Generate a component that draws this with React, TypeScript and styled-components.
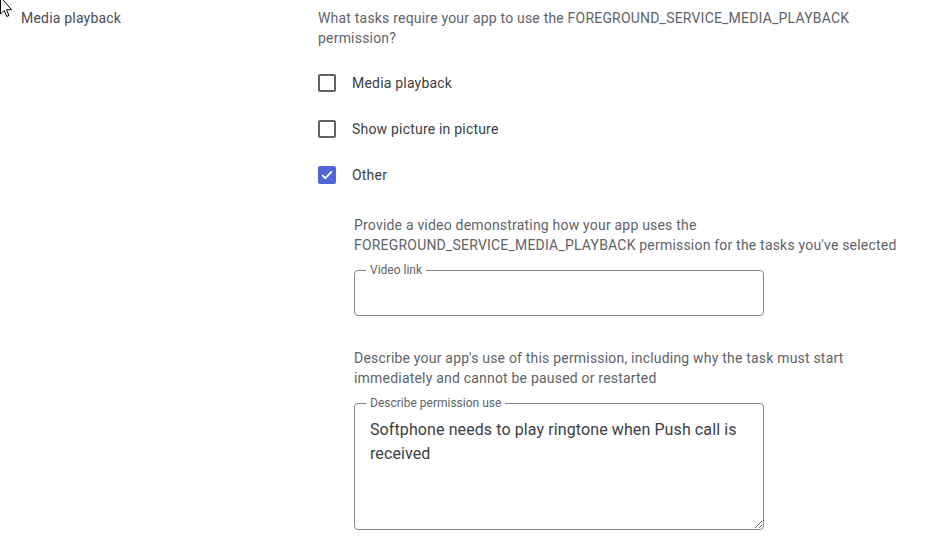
import { useState } from 'react';
import styled, { createGlobalStyle } from 'styled-components';

const GlobalStyle = createGlobalStyle`
  body {
    margin: 0;
    background: #ffffff;
    font-family: Roboto, "Noto Sans", Arial, sans-serif;
  }
`;

const Page = styled.div`
  position: relative;
  display: grid;
  grid-template-columns: 318px 590px;
  padding-top: 8px;
  font-size: 14px;
  line-height: 20px;
  letter-spacing: 0.2px;
`;

const SectionTitle = styled.div`
  padding-left: 21px;
  color: #4a4d51;
`;

const Content = styled.div`
  display: flex;
  flex-direction: column;
`;

const Prompt = styled.p<{ $top?: number }>`
  margin: ${(p) => p.$top ?? 0}px 0 0;
  color: #5f6368;
`;

const Options = styled.div`
  display: flex;
  flex-direction: column;
  margin-top: 12px;
`;

const OptionRow = styled.label`
  display: flex;
  align-items: center;
  gap: 16px;
  height: 46px;
  color: #3c4043;
  cursor: pointer;
`;

const Box = styled.span<{ $checked: boolean }>`
  box-sizing: border-box;
  width: 18px;
  height: 18px;
  border-radius: 2px;
  border: 2px solid ${(p) => (p.$checked ? '#5167d8' : '#5f6368')};
  background: ${(p) => (p.$checked ? '#5167d8' : 'transparent')};
  display: flex;
  align-items: center;
  justify-content: center;
`;

const Nested = styled.div`
  display: flex;
  flex-direction: column;
  margin-top: 17px;
  padding-left: 36px;
`;

const Outline = styled.fieldset`
  box-sizing: border-box;
  margin: 7px 0 0;
  padding: 0;
  width: 410px;
  border: 1px solid #80868b;
  border-radius: 4px;
`;

const Legend = styled.legend`
  margin-left: 11px;
  padding: 0 4px;
  font-size: 12px;
  line-height: 16px;
  letter-spacing: 0;
  color: #5f6368;
`;

const TextInput = styled.input`
  box-sizing: border-box;
  display: block;
  width: 100%;
  height: 37px;
  padding: 0 15px;
  border: none;
  outline: none;
  background: transparent;
  font: inherit;
  font-size: 16px;
  color: #3c4043;
`;

const TextArea = styled.textarea`
  box-sizing: border-box;
  display: block;
  width: 100%;
  height: 118px;
  padding: 7px 15px;
  border: none;
  outline: none;
  background: transparent;
  font-family: inherit;
  font-size: 16px;
  line-height: 24px;
  letter-spacing: 0.1px;
  color: #3c4043;
  resize: vertical;
`;

const Cursor = styled.svg`
  position: absolute;
  left: 0;
  top: 0;
  pointer-events: none;
`;

const options = ['Media playback', 'Show picture in picture', 'Other'];

export default function App() {
  const [checked, setChecked] = useState<string[]>(['Other']);
  const [description, setDescription] = useState(
    'Softphone needs to play ringtone when Push call is received'
  );

  function toggle(name: string) {
    setChecked((c) => (c.includes(name) ? c.filter((x) => x !== name) : [...c, name]));
  }

  return (
    <>
      <GlobalStyle />
      <Page>
        <SectionTitle>Media playback</SectionTitle>
        <Content>
          <Prompt>
            What tasks require your app to use the FOREGROUND_SERVICE_MEDIA_PLAYBACK permission?
          </Prompt>
          <Options>
            {options.map((o) => {
              const on = checked.includes(o);
              return (
                <OptionRow key={o} onClick={() => toggle(o)}>
                  <Box $checked={on}>
                    {on && (
                      <svg width="12" height="10" viewBox="0 0 12 10">
                        <path d="M1.2 5.2l3.1 3 6.5-6.8" fill="none" stroke="#fff" strokeWidth="1.8" />
                      </svg>
                    )}
                  </Box>
                  {o}
                </OptionRow>
              );
            })}
          </Options>
          {checked.includes('Other') && (
            <Nested>
              <Prompt>
                Provide a video demonstrating how your app uses the FOREGROUND_SERVICE_MEDIA_PLAYBACK
                permission for the tasks you've selected
              </Prompt>
              <Outline>
                <Legend>Video link</Legend>
                <TextInput type="text" />
              </Outline>
              <Prompt $top={32}>
                Describe your app's use of this permission, including why the task must start
                immediately and cannot be paused or restarted
              </Prompt>
              <Outline>
                <Legend>Describe permission use</Legend>
                <TextArea value={description} onChange={(e) => setDescription(e.target.value)} />
              </Outline>
            </Nested>
          )}
        </Content>
        <Cursor width="14" height="20" viewBox="0 0 14 20">
          <path d="M0.5 -3 L0.5 14 L4.2 10.5 L6.8 16.5 L9 15.5 L6.5 9.7 L11.5 9.7 Z" fill="#fff" stroke="#000" strokeWidth="1" />
        </Cursor>
      </Page>
    </>
  );
}
